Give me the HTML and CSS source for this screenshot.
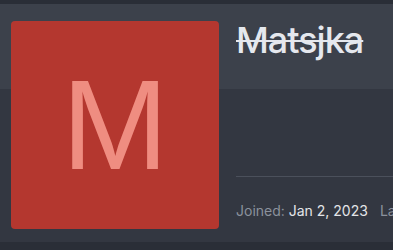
FILE: index.html
```html
<!DOCTYPE html>
<html lang="en">

<head>
    <meta charset="utf-8">
    <title>Matsjka - Profile</title>
    <link rel="stylesheet" href="styles.css">
</head>

<body>

    <section class="profile">
        <div class="avatar">M</div>
        <div class="profile-info">
            <h1 class="username">Matsjka</h1>
            <hr class="divider">
            <div class="meta">
                <span><span class="label">Joined:</span> Jan 2, 2023</span>
                <span><span class="label">Last seen:</span> Jan 2, 2023</span>
            </div>
        </div>
    </section>

</body>

</html>
```

FILE: styles.css
```css
body {
    font-family: Inter, 'Liberation Sans', sans-serif;
    margin: 0;
    padding: 4px 0 0 0;
    background-color: #2a2e37;
    height: 250px;
    overflow: hidden;
}

.profile {
    display: flex;
    width: 520px;
    padding: 17px 0 13px 11px;
    background: linear-gradient(#3c414b 0, #3c414b 85px, #333741 85px);
}

.avatar {
    flex: none;
    width: 208px;
    height: 208px;
    border-radius: 4px;
    background-color: #b4372f;
    color: #ef8d81;
    font-family: 'Liberation Sans', sans-serif;
    font-size: 128px;
    line-height: 208px;
    text-align: center;
}

.profile-info {
    flex: 1;
    display: flex;
    flex-direction: column;
    margin-left: 17px;
}

.username {
    margin: -3px 0 0 0;
    font-size: 36px;
    font-weight: 500;
    line-height: 44px;
    letter-spacing: -1px;
    color: #e5e8ee;
    text-decoration: line-through;
    text-decoration-thickness: 2px;
}

.divider {
    margin: auto 0 0 0;
    border: none;
    border-top: 1px solid #4b505b;
}

.meta {
    display: flex;
    gap: 12px;
    margin: 24px 0 8px 0;
    font-size: 14px;
    line-height: 20px;
    color: #e3e5e8;
    white-space: nowrap;
}

.label {
    color: #8b919c;
}
```
